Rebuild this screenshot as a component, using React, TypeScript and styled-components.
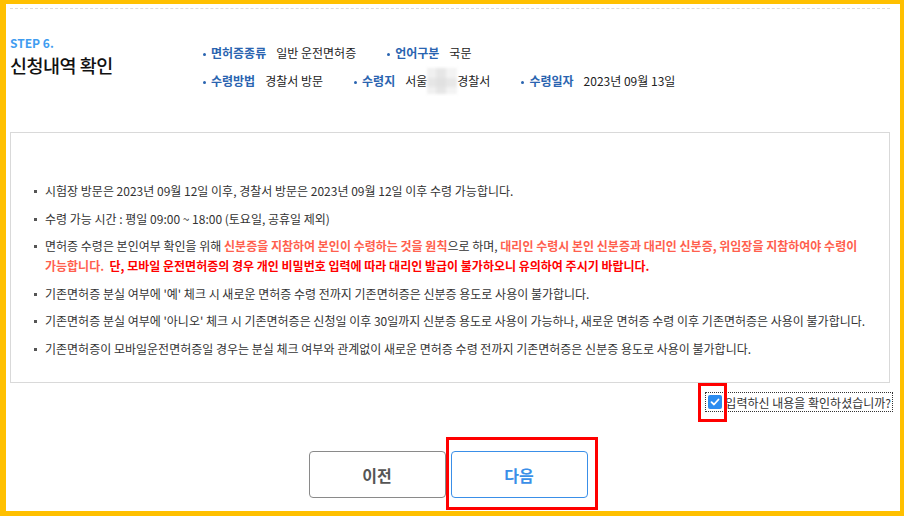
import styled, { createGlobalStyle } from 'styled-components'

const GlobalStyle = createGlobalStyle`
  html, body {
    margin: 0;
    padding: 0;
    background: #fff;
  }
  body {
    font-family: "Noto Sans CJK KR", "Noto Sans", sans-serif;
    color: #333;
  }
`

const Frame = styled.div`
  width: 904px;
  height: 516px;
  box-sizing: border-box;
  border-style: solid;
  border-color: #ffc000;
  border-width: 4px 4px 5px 6px;
  background: #fff;
  padding: 4px 10px 0 4px;
  display: flex;
  flex-direction: column;
  overflow: hidden;
`

const Header = styled.div`
  display: flex;
  align-items: flex-start;
  height: 80px;
  border-top: 1px dashed #dcdcdc;
`

const TitleBlock = styled.div`
  width: 193px;
  padding-top: 26px;
  display: flex;
  flex-direction: column;
  gap: 2px;
`

const Step = styled.span`
  font-size: 12px;
  line-height: 16px;
  font-weight: 700;
  color: #3f9cf0;
`

const Title = styled.h1`
  margin: 0;
  font-size: 18.5px;
  line-height: 24px;
  font-weight: 500;
  color: #111;
  letter-spacing: -0.5px;
`

const InfoBlock = styled.div`
  padding-top: 36px;
  display: flex;
  flex-direction: column;
  gap: 12px;
`

const InfoRow = styled.div`
  display: flex;
  gap: 31px;
  height: 16px;
`

const InfoItem = styled.div`
  display: flex;
  align-items: center;
  gap: 10px;
  font-size: 12px;
  line-height: 16px;
  position: relative;
  padding-left: 8px;

  &::before {
    content: '';
    position: absolute;
    left: 0;
    top: 8px;
    width: 3px;
    height: 3px;
    border-radius: 50%;
    background: #2a64b0;
  }
`

const Label = styled.span`
  font-weight: 700;
  color: #2a64b0;
`

const Value = styled.span`
  color: #222;
  display: inline-flex;
  align-items: center;
  height: 16px;
`

const Blur = styled.span`
  display: inline-block;
  width: 30px;
  height: 26px;
  margin: -5px 0;
  background:
    linear-gradient(180deg, transparent 0 40%, rgba(220, 220, 220, 0.5) 40% 75%, transparent 75%),
    linear-gradient(90deg, #f0f0f0 0 30%, #e6e6e6 30% 65%, #f3f3f3 65%);
  filter: blur(1.5px);
`

const NoticeBox = styled.div`
  margin-top: 43px;
  border: 1px solid #d9d9d9;
  padding: 48px 22px 23.5px 22px;
`

const NoticeList = styled.ul`
  margin: 0;
  padding: 0;
  list-style: none;
`

const NoticeItem = styled.li`
  position: relative;
  padding-left: 12px;
  font-size: 12px;
  line-height: 20px;
  color: #333;

  & + & {
    margin-top: 7.5px;
  }

  &::before {
    content: '';
    position: absolute;
    left: 1px;
    top: 9px;
    width: 3px;
    height: 3px;
    background: #555;
  }
`

const Soft = styled.span`
  color: #ff5f4e;
  font-weight: 700;
`

const Strong = styled.span`
  color: #ff0000;
  font-weight: 700;
`

const ConfirmRow = styled.div`
  display: flex;
  justify-content: flex-end;
  margin-top: 10px;
  margin-right: -2px;
`

const ConfirmLabel = styled.label`
  display: inline-flex;
  align-items: center;
  gap: 3px;
  height: 18px;
  padding: 0 1px 0 2px;
  outline: 1px dotted #333;
  font-size: 12px;
  color: #333;
`

const CheckWrap = styled.span`
  position: relative;
  display: inline-flex;
`

const CheckBox = styled.span`
  width: 14px;
  height: 14px;
  border-radius: 2px;
  background: #2b8cf0;
  display: inline-flex;
  align-items: center;
  justify-content: center;
`

const RedMark = styled.span<{ $w: number; $h: number; $l: number; $t: number }>`
  position: absolute;
  left: ${p => p.$l}px;
  top: ${p => p.$t}px;
  width: ${p => p.$w}px;
  height: ${p => p.$h}px;
  box-sizing: border-box;
  border: 3px solid #f00;
  pointer-events: none;
`

const ButtonRow = styled.div`
  display: flex;
  justify-content: center;
  gap: 5px;
  margin-top: 40px;
  padding-right: 4px;
`

const ButtonWrap = styled.div`
  position: relative;
`

const Button = styled.button<{ $primary?: boolean }>`
  width: 137px;
  height: 47px;
  box-sizing: border-box;
  border-radius: 4px;
  background: #fff;
  border: 1px solid ${p => (p.$primary ? '#3a8fe8' : '#8a8a8a')};
  color: ${p => (p.$primary ? '#3a8fe8' : '#555')};
  font-family: "Noto Sans CJK KR", sans-serif;
  font-size: 16px;
  font-weight: 700;
  cursor: pointer;
`

export default function App() {
  return (
    <>
      <GlobalStyle />
      <Frame>
        <Header>
          <TitleBlock>
            <Step>STEP 6.</Step>
            <Title>신청내역 확인</Title>
          </TitleBlock>
          <InfoBlock>
            <InfoRow>
              <InfoItem>
                <Label>면허증종류</Label>
                <Value>일반 운전면허증</Value>
              </InfoItem>
              <InfoItem>
                <Label>언어구분</Label>
                <Value>국문</Value>
              </InfoItem>
            </InfoRow>
            <InfoRow>
              <InfoItem>
                <Label>수령방법</Label>
                <Value>경찰서 방문</Value>
              </InfoItem>
              <InfoItem>
                <Label>수령지</Label>
                <Value>
                  서울<Blur />경찰서
                </Value>
              </InfoItem>
              <InfoItem>
                <Label>수령일자</Label>
                <Value>2023년 09월 13일</Value>
              </InfoItem>
            </InfoRow>
          </InfoBlock>
        </Header>

        <NoticeBox>
          <NoticeList>
            <NoticeItem>시험장 방문은 2023년 09월 12일 이후, 경찰서 방문은 2023년 09월 12일 이후 수령 가능합니다.</NoticeItem>
            <NoticeItem>수령 가능 시간 : 평일 09:00 ~ 18:00 (토요일, 공휴일 제외)</NoticeItem>
            <NoticeItem>
              면허증 수령은 본인여부 확인을 위해 <Soft>신분증을 지참하여 본인이 수령하는 것을 원칙</Soft>으로 하며,{' '}
              <Soft>대리인 수령시 본인 신분증과 대리인 신분증, 위임장을 지참하여야 수령이</Soft>{' '}
              <Soft>가능합니다.</Soft>
              {'\u00a0 '}
              <Strong>단, 모바일 운전면허증의 경우 개인 비밀번호 입력에 따라 대리인 발급이 불가하오니 유의하여 주시기 바랍니다.</Strong>
            </NoticeItem>
            <NoticeItem>기존면허증 분실 여부에 '예' 체크 시 새로운 면허증 수령 전까지 기존면허증은 신분증 용도로 사용이 불가합니다.</NoticeItem>
            <NoticeItem>기존면허증 분실 여부에 '아니오' 체크 시 기존면허증은 신청일 이후 30일까지 신분증 용도로 사용이 가능하나, 새로운 면허증 수령 이후 기존면허증은 사용이 불가합니다.</NoticeItem>
            <NoticeItem>기존면허증이 모바일운전면허증일 경우는 분실 체크 여부와 관계없이 새로운 면허증 수령 전까지 기존면허증은 신분증 용도로 사용이 불가합니다.</NoticeItem>
          </NoticeList>
        </NoticeBox>

        <ConfirmRow>
          <ConfirmLabel>
            <CheckWrap>
              <CheckBox>
                <svg width="10" height="10" viewBox="0 0 10 10">
                  <path d="M1.5 5.2 L4 7.5 L8.5 2.5" fill="none" stroke="#fff" strokeWidth="1.8" strokeLinecap="round" strokeLinejoin="round" />
                </svg>
              </CheckBox>
              <RedMark $l={-10} $t={-12} $w={29} $h={39} />
            </CheckWrap>
            입력하신 내용을 확인하셨습니까?
          </ConfirmLabel>
        </ConfirmRow>

        <ButtonRow>
          <ButtonWrap>
            <Button>이전</Button>
          </ButtonWrap>
          <ButtonWrap>
            <Button $primary>다음</Button>
            <RedMark $l={-5} $t={-14} $w={152} $h={73} />
          </ButtonWrap>
        </ButtonRow>
      </Frame>
    </>
  )
}
